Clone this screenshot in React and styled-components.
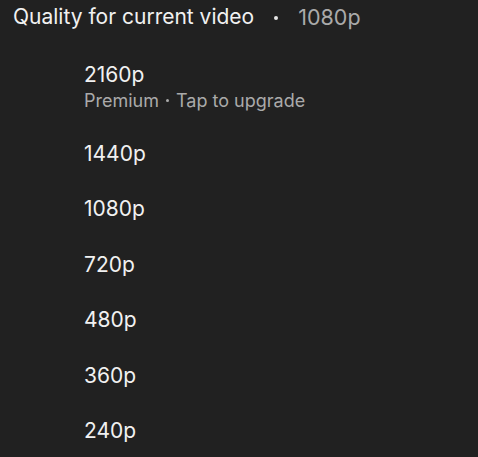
import React from 'react';
import styled, { createGlobalStyle } from 'styled-components';

const QUALITIES = [
  { label: '2160p', note: 'Premium', action: 'Tap to upgrade' },
  { label: '1440p' },
  { label: '1080p' },
  { label: '720p' },
  { label: '480p' },
  { label: '360p' },
  { label: '240p' },
];

function App() {
  return (
    <>
      <GlobalStyle />
      <Sheet>
        <Header>
          <Title>Quality for current video</Title>
          <Dot />
          <Current>1080p</Current>
        </Header>
        <List>
          {QUALITIES.map(({ label, note, action }) => (
            <Item key={label}>
              <Label>{label}</Label>
              {note && (
                <Sub>
                  {note}
                  <SmallDot />
                  {action}
                </Sub>
              )}
            </Item>
          ))}
        </List>
      </Sheet>
    </>
  );
}

const GlobalStyle = createGlobalStyle`
  html, body {
    margin: 0;
    background: #212121;
  }
  body {
    font-family: Inter, 'Liberation Sans', sans-serif;
    -webkit-font-smoothing: antialiased;
  }
`;
const Sheet = styled.div`
  width: 478px;
  height: 457px;
  background: #212121;
  overflow: hidden;
`;
const Header = styled.div`
  display: flex;
  align-items: center;
  gap: 20px;
  padding: 4px 0 17px 13px;
  height: 26px;
`;
const Title = styled.span`
  font-size: 21px;
  line-height: 26px;
  color: #f1f1f1;
`;
const Dot = styled.span`
  width: 4px;
  height: 4px;
  border-radius: 50%;
  background: #e6e6e6;
  margin-top: 2px;
`;
const Current = styled.span`
  font-size: 21.5px;
  line-height: 26px;
  color: #aaaaaa;
`;
const List = styled.ul`
  list-style: none;
  margin: 0;
  padding: 0;
`;
const Item = styled.li`
  padding: 14.7px 0 14.7px 84px;
  display: flex;
  flex-direction: column;
  gap: 2px;
`;
const Label = styled.span`
  font-size: 21px;
  line-height: 26px;
  color: #f1f1f1;
`;
const Sub = styled.span`
  display: flex;
  align-items: center;
  gap: 7px;
  font-size: 18px;
  line-height: 22px;
  color: #aaaaaa;
`;
const SmallDot = styled.span`
  width: 3px;
  height: 3px;
  border-radius: 50%;
  background: #aaaaaa;
`;

export default App;
